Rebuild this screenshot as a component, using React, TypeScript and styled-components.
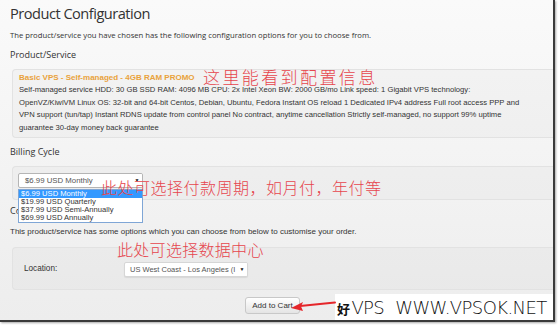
import React from "react";
import styled, { createGlobalStyle } from "styled-components";

const Global = createGlobalStyle`
  html, body { margin: 0; padding: 0; background: #ffffff; }
  body { width: 559px; height: 327px; overflow: hidden; }
`;

const Frame = styled.div`
  position: relative;
  width: 555px;
  height: 322px;
  box-sizing: border-box;
  border-right: 2px solid #3a3a3a;
  border-bottom: 2px solid #3a3a3a;
  box-shadow: 1px 1px 2px rgba(0, 0, 0, 0.35);
  background: linear-gradient(#fafafa, #ededed);
  padding-left: 10px;
  display: flex;
  flex-direction: column;
  overflow: hidden;
  font-family: "Liberation Sans", Arial, sans-serif;
  color: #333;
`;

const Title = styled.h1`
  margin: 0;
  height: 26px;
  line-height: 26px;
  font-family: "Open Sans", sans-serif;
  font-weight: 400;
  font-size: 14.6px;
  letter-spacing: -0.5px;
  color: #333;
`;

const Intro = styled.p`
  margin: 0;
  height: 18px;
  line-height: 18px;
  font-family: "Open Sans", sans-serif;
  font-size: 7.7px;
  color: #333;
`;

const Heading = styled.h2<{ $h: number }>`
  margin: 0;
  height: ${(p) => p.$h}px;
  line-height: ${(p) => p.$h}px;
  font-family: "Open Sans", sans-serif;
  font-weight: 400;
  font-size: 9px;
  color: #333;
`;

const Panel = styled.div<{ $h: number; $mt?: number }>`
  margin: ${(p) => p.$mt ?? 0}px 0 0 2px;
  height: ${(p) => p.$h}px;
  box-sizing: border-box;
  border: 1px solid #e2e2e2;
  border-right: none;
  border-radius: 4px 0 0 4px;
  background: rgba(0, 0, 0, 0.018);
`;

const ProductPanel = styled(Panel)`
  padding: 2px 0 0 6px;
`;

const ProductName = styled.div`
  height: 12px;
  line-height: 12px;
  font-size: 8px;
  font-weight: bold;
  color: #e9a23b;
`;

const ProductDesc = styled.div`
  line-height: 12.6px;
  font-size: 7.65px;
  color: #333;
  white-space: nowrap;
`;

const BillingPanel = styled(Panel)`
  padding: 6px 0 0 5px;
`;

const Select = styled.div<{ $w: number }>`
  position: relative;
  width: ${(p) => p.$w}px;
  height: 15px;
  box-sizing: border-box;
  border: 1px solid #b5b5b5;
  border-radius: 2px;
  background: #fff;
  font-size: 7.8px;
  line-height: 13px;
  padding-left: 6px;
  color: #555;
  white-space: nowrap;
  overflow: hidden;
`;

const Caret = styled.span`
  position: absolute;
  right: 0;
  top: 0;
  width: 10px;
  text-align: center;
  background: #fff;
  font-size: 5px;
  color: #111;
`;

const DropList = styled.ul`
  position: absolute;
  left: 18px;
  top: 189px;
  width: 125px;
  margin: 0;
  padding: 0;
  list-style: none;
  box-sizing: border-box;
  border: 1px solid #7fa6d6;
  background: #fff;
  font-size: 7.6px;
  z-index: 2;
`;

const DropItem = styled.li<{ $active?: boolean }>`
  height: 8px;
  line-height: 8px;
  padding-left: 2px;
  background: ${(p) => (p.$active ? "#3399ff" : "#fff")};
  color: ${(p) => (p.$active ? "#fff" : "#333")};
`;

const Note = styled.p`
  margin: 1px 0 0;
  height: 18px;
  line-height: 18px;
  font-size: 8px;
  color: #333;
`;

const OptionsPanel = styled(Panel)`
  display: grid;
  grid-template-columns: 100px auto;
  align-items: center;
  padding: 0 0 0 11px;
`;

const Label = styled.span`
  font-size: 8.2px;
  color: #333;
`;

const LocSelect = styled(Select)`
  margin-top: 1px;
  border-color: #d6d6d6;
  box-shadow: 0 1px 1px rgba(0, 0, 0, 0.08);
  font-size: 7.5px;
  padding-left: 5px;
`;

const ButtonRow = styled.div`
  display: flex;
  padding: 7px 0 0 235px;
`;

const Button = styled.button`
  width: 55px;
  height: 17px;
  padding: 0;
  border: 1px solid #c8c8c8;
  border-radius: 3px;
  background: linear-gradient(#ffffff, #e4e4e4);
  font-family: "Liberation Sans", Arial, sans-serif;
  font-size: 8px;
  color: #333;
`;

const Annotation = styled.span<{ $x: number; $y: number; $size: number; $ls: number }>`
  position: absolute;
  left: ${(p) => p.$x}px;
  top: ${(p) => p.$y}px;
  font-family: "Noto Sans CJK SC", sans-serif;
  font-weight: 300;
  font-size: ${(p) => p.$size}px;
  letter-spacing: ${(p) => p.$ls}px;
  line-height: 1;
  color: #e6454d;
  white-space: nowrap;
  z-index: 3;
`;

const Watermark = styled.div`
  position: absolute;
  left: 335px;
  top: 294px;
  width: 218px;
  height: 27px;
  background: #fff;
  display: flex;
  align-items: center;
  gap: 11px;
  padding-left: 2px;
  box-sizing: border-box;
  font-family: "DejaVu Sans", sans-serif;
  font-weight: 200;
  font-size: 18px;
  letter-spacing: -0.6px;
  color: #111;
  white-space: nowrap;
  z-index: 3;
`;

const WmSmall = styled.span`
  font-family: "Noto Sans CJK SC", sans-serif;
  font-size: 13px;
  font-weight: 700;
  margin-right: 2px;
`;

const ArrowSvg = styled.svg`
  position: absolute;
  left: 288px;
  top: 298px;
  z-index: 4;
`;

export default function App() {
  return (
    <>
      <Global />
      <Frame>
        <Title>Product Configuration</Title>
        <Intro>
          The product/service you have chosen has the following configuration options for you to choose from.
        </Intro>
        <Heading $h={22}>Product/Service</Heading>
        <ProductPanel $h={69} $mt={3}>
          <ProductName>Basic VPS - Self-managed - 4GB RAM PROMO</ProductName>
          <ProductDesc>
            Self-managed service HDD: 30 GB SSD RAM: 4096 MB CPU: 2x Intel Xeon BW: 2000 GB/mo Link speed: 1 Gigabit VPS technology:
            <br />
            OpenVZ/KiwiVM Linux OS: 32-bit and 64-bit Centos, Debian, Ubuntu, Fedora Instant OS reload 1 Dedicated IPv4 address Full root access PPP and
            <br />
            VPN support (tun/tap) Instant RDNS update from control panel No contract, anytime cancellation Strictly self-managed, no support 99% uptime
            <br />
            guarantee 30-day money back guarantee
          </ProductDesc>
        </ProductPanel>
        <Heading $h={28}>Billing Cycle</Heading>
        <BillingPanel $h={34}>
          <Select $w={125}>
            $6.99 USD Monthly<Caret>▼</Caret>
          </Select>
        </BillingPanel>
        <Heading $h={22}>Configurable Options</Heading>
        <Note>This product/service has some options which you can choose from below to customise your order.</Note>
        <OptionsPanel $h={43} $mt={6}>
          <Label>Location:</Label>
          <LocSelect $w={124}>
            US West Coast - Los Angeles (I<Caret>▼</Caret>
          </LocSelect>
        </OptionsPanel>
        <ButtonRow>
          <Button>Add to Cart</Button>
        </ButtonRow>

        <DropList>
          <DropItem $active>$6.99 USD Monthly</DropItem>
          <DropItem>$19.99 USD Quarterly</DropItem>
          <DropItem>$37.99 USD Semi-Annually</DropItem>
          <DropItem>$69.99 USD Annually</DropItem>
        </DropList>

        <Annotation $x={203} $y={68} $size={17} $ls={2.4}>这里能看到配置信息</Annotation>
        <Annotation $x={101} $y={179} $size={16} $ls={0.5}>此处可选择付款周期，如月付，年付等</Annotation>
        <Annotation $x={117} $y={241} $size={16} $ls={0.3}>此处可选择数据中心</Annotation>

        <Watermark>
          <span>
            <WmSmall>好</WmSmall>VPS
          </span>
          <span>WWW.VPSOK.NET</span>
        </Watermark>
        <ArrowSvg width="50" height="16" viewBox="0 0 50 16">
          <path d="M12 8 L47 4.5" stroke="#e5262b" strokeWidth="2" strokeLinecap="round" fill="none" />
          <path d="M3 10 L15 4 L13 8.5 L15 13 Z" fill="#e5262b" />
        </ArrowSvg>
      </Frame>
    </>
  );
}
